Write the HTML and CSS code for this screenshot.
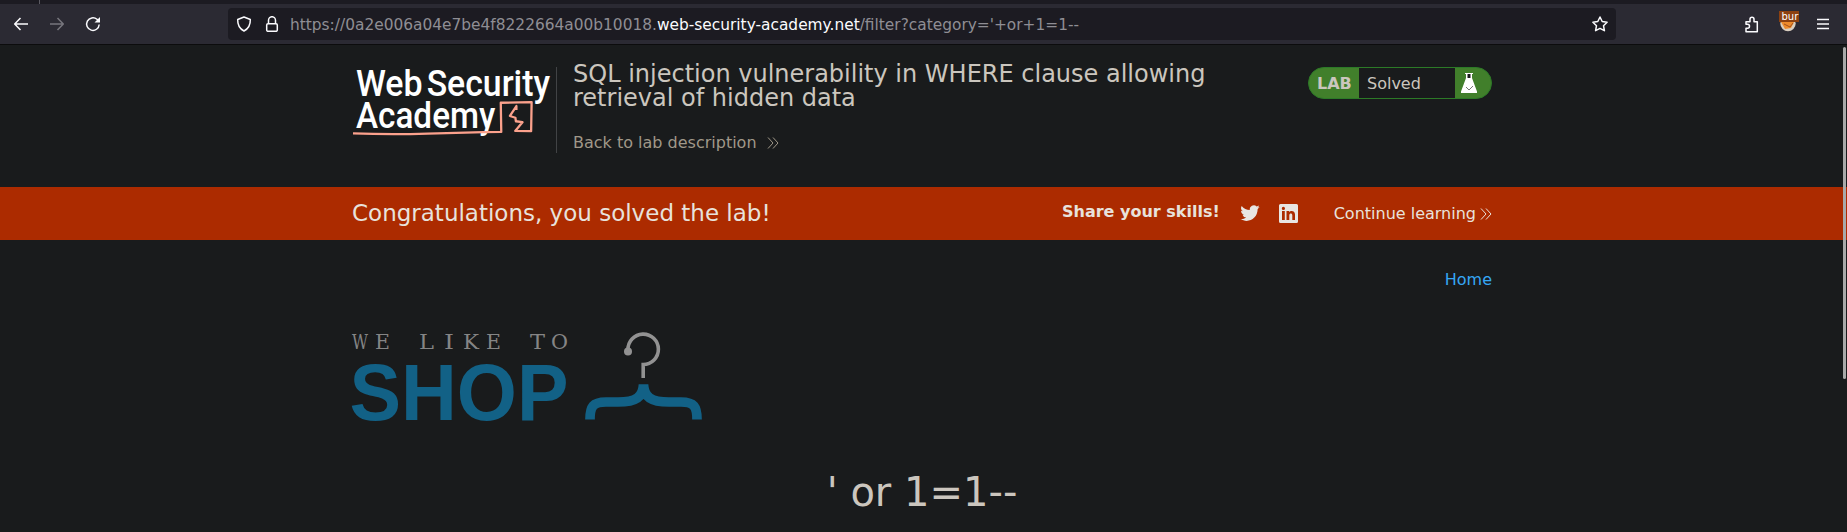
FILE: index.html
```html
<!DOCTYPE html>
<html lang="en">
<head>
<meta charset="utf-8">
<title>SQL injection vulnerability in WHERE clause allowing retrieval of hidden data</title>
<link rel="stylesheet" href="styles.css">
</head>
<body>
<div class="tabstrip"><span class="tab-divider"></span></div>
<nav class="toolbar">
  <svg class="nav-icon back" width="16" height="16" viewBox="0 0 16 16"><path d="M15 8H2M7.500 2L1.700 8l5.800 6"/></svg>
  <svg class="nav-icon forward" width="16" height="16" viewBox="0 0 16 16"><path d="M1 8h13M8.500 2l5.800 6-5.800 6"/></svg>
  <svg class="nav-icon reload" width="16" height="16" viewBox="0 0 16 16"><path d="M14.200 8.500A6.300 6.300 0 1 1 12 3.300l1 1"/><path class="solid" d="M15 1v5.500H9.500z"/></svg>
  <div class="urlbar">
    <svg class="nav-icon" width="16" height="16" viewBox="0 0 16 16"><path d="M8 1l6.300 2.500c.2 5-1.500 9-6.300 11.500C3.200 12.500 1.500 8.500 1.700 3.500z"/></svg>
    <svg class="nav-icon lock" width="14" height="16" viewBox="0 0 14 16"><path d="M3.500 7.500V4.200a3.500 3.500 0 0 1 7 0v3.300"/><rect x="1.700" y="7.700" width="10.600" height="7.600" rx="1.300"/></svg>
    <span class="url">https://0a2e006a04e7be4f8222664a00b10018.<b>web-security-academy.net</b>/filter?category='+or+1=1--</span>
    <svg class="nav-icon star" width="16" height="16" viewBox="0 0 16 16"><path d="M8 1l2.200 4.500 4.900.7-3.600 3.500.9 5L8 12.400l-4.400 2.300.9-5L.9 6.200l4.900-.7z"/></svg>
  </div>
  <svg class="nav-icon puzzle" width="16" height="17" viewBox="0 0 16 17"><path d="M2 5.700h4V3.200a2 2 0 0 1 4 0v2.500h3.300v10H2v-3.500h1.500a2 2 0 0 0 0-4H2z"/></svg>
  <svg class="profile" width="20" height="22" viewBox="0 0 20 22"><circle cx="9" cy="12.500" r="7.700" fill="#d9cfc0"/><path d="M2 11h13l-3 6-6 1z" fill="#ed8b2c"/><path d="M5 13l6 3 3-4" stroke="#a4501b" fill="none"/><path d="M0 0h20v11H0z" fill="#8c4111"/><text x="2.500" y="8.500">bur</text></svg>
  <svg class="nav-icon" width="12" height="12" viewBox="0 0 12 12"><path d="M0 1.500h12M0 6h12M0 10.500h12"/></svg>
</nav>
<header class="lab-header container">
  <svg class="academy-logo" width="205" height="86" viewBox="0 0 205 86">
    <text x="4" y="28.700" class="logo-word" textLength="67" lengthAdjust="spacingAndGlyphs">Web</text>
    <text x="75" y="28.700" class="logo-word" textLength="124" lengthAdjust="spacingAndGlyphs">Security</text>
    <text x="4" y="61.200" class="logo-word" textLength="140" lengthAdjust="spacingAndGlyphs">Academy</text>
    <path class="logo-line" d="M1 66.500q36 1.500 75 .3t74-1.800l-.5-29.300 31-.7-.5 29.300-16-.3 7.300-8.700-6.600-1-.5-3.500-5.500-1.800 6.500-10v4"/>
  </svg>
  <div class="title-block">
    <h2 class="title">SQL injection vulnerability in WHERE clause allowing<br>retrieval of hidden data</h2>
    <a class="back-link">Back to lab description
      <svg class="chevrons" width="12" height="12" viewBox="0 0 12 12"><path d="M1 .5L6 6l-5 5.500M6 .5L11 6l-5 5.500"/></svg></a>
  </div>
  <div class="lab-status">
    <span class="lab-label">LAB</span><span class="lab-state">Solved</span>
    <span class="lab-flask"><svg width="18" height="22" viewBox="0 0 18 22"><path d="M5 1h8v1h-1v4l5 13.500V21H1v-1.500L6 6V2H5z" fill="#fff"/><path d="M7.500 2h3v4h-3z" fill="#1a1c1d"/><path d="M6 15l3 3 4-4" fill="none" stroke="#777"/></svg></span>
  </div>
</header>
<section class="banner">
  <div class="container banner-row">
    <h4 class="congrats">Congratulations, you solved the lab!</h4>
    <strong class="share">Share your skills!</strong>
    <svg class="social twitter" width="20" height="20" viewBox="0 0 24 24"><path d="M23.600 4.900a9.500 9.500 0 0 1-2.700.7 4.700 4.700 0 0 0 2.100-2.600 9.600 9.600 0 0 1-3 1.200 4.800 4.800 0 0 0-8.200 4.300A13.500 13.500 0 0 1 2 3.600a4.800 4.800 0 0 0 1.500 6.300 4.700 4.700 0 0 1-2.200-.6 4.800 4.800 0 0 0 3.800 4.700 4.700 4.700 0 0 1-2.100.1 4.800 4.800 0 0 0 4.400 3.300A9.500 9.500 0 0 1 .4 19.300C10 25 21 19 21.200 7.300z"/></svg>
    <svg class="social linkedin" width="19" height="19" viewBox="0 0 19 19"><path fill-rule="evenodd" d="M1.500 0h16A1.500 1.500 0 0 1 19 1.500v16a1.500 1.500 0 0 1-1.500 1.500h-16A1.500 1.500 0 0 1 0 17.500v-16A1.500 1.500 0 0 1 1.500 0zM3 7v9h2.800V7zM4.400 2.800a1.600 1.600 0 1 0 0 3.200 1.600 1.600 0 0 0 0-3.200zM7.500 7v9h2.800v-4.700c0-2.500 3-2.500 3 0V16H16v-5.500c0-4-4.500-4.500-5.800-2.200V7z"/></svg>
    <a class="continue">Continue learning <svg class="chevrons" width="12" height="12" viewBox="0 0 12 12"><path d="M1 .5L6 6l-5 5.500M6 .5L11 6l-5 5.500"/></svg></a>
  </div>
</section>
<main class="container">
  <div class="top-links"><a class="home">Home</a></div>
  <svg class="shop-logo" width="352" height="92" viewBox="0 0 352 92">
    <text class="tagline" y="17" x="0" textLength="16" lengthAdjust="spacingAndGlyphs">W</text>
    <text class="tagline" y="17" x="23" textLength="15" lengthAdjust="spacingAndGlyphs">E</text>
    <text class="tagline" y="17" x="67" textLength="15" lengthAdjust="spacingAndGlyphs">L</text>
    <text class="tagline" y="17" x="92" textLength="10" lengthAdjust="spacingAndGlyphs">I</text>
    <text class="tagline" y="17" x="111" textLength="16" lengthAdjust="spacingAndGlyphs">K</text>
    <text class="tagline" y="17" x="134" textLength="15" lengthAdjust="spacingAndGlyphs">E</text>
    <text class="tagline" y="17" x="178" textLength="15" lengthAdjust="spacingAndGlyphs">T</text>
    <text class="tagline" y="17" x="199" textLength="17" lengthAdjust="spacingAndGlyphs">O</text>
    <text class="shop" x="-2.500" y="87.500" textLength="219" lengthAdjust="spacingAndGlyphs">SHOP</text>
    <circle cx="276" cy="19.500" r="4" fill="#929292"/>
    <path d="M276 18a15.200 15.200 0 1 1 15.200 14.500V46" fill="none" stroke="#929292" stroke-width="3.600"/>
    <path d="M238 87.500c0-13 3-17.500 16-17.500h12c18 0 25-5 25.500-17.500C292 65 299 70 317 70h12c13 0 16 4.500 16 17.500" fill="none" stroke="#126186" stroke-width="9.700"/>
  </svg>
  <h1 class="category">' or 1=1--</h1>
</main>
</body>
</html>
```
FILE: styles.css
```css
* { box-sizing: border-box; }
body { margin: 0; height: 532px; overflow: hidden; background: #191b1c; color: #cbc6be; font: 16px/20px "DejaVu Sans", sans-serif; position: relative; }
body::after { content: ""; position: absolute; right: 1px; top: 47px; width: 3px; height: 332px; border-radius: 2px; background: #a9a9a9; }
h1, h2, h4 { margin: 0; font-weight: 400; }
.container { width: 1140px; margin: 0 auto 0 352px; }
.tabstrip { height: 4px; background: #1c1b22; padding-left: 39px; }
.tab-divider { display: block; width: 1px; height: 4px; background: #5b5a62; }
.toolbar { height: 41px; background: #2b2a33; border-bottom: 1px solid #0c0c0d; display: flex; align-items: center; padding-left: 13px; }
.nav-icon { display: block; flex: none; fill: none; stroke: #fbfbfe; stroke-width: 1.5; stroke-linejoin: round; }
.nav-icon .solid { fill: #fbfbfe; stroke: none; }
.forward { margin-left: 20px; stroke: #77767d; }
.reload { margin-left: 20px; }
.urlbar { width: 1388px; height: 32px; margin-left: 127px; padding-left: 8px; display: flex; align-items: center; background: #1c1b22; border-radius: 4px; }
.lock { margin-left: 13px; }
.url { margin: 1px 0 0 11px; font-size: 15.4px; color: #8f8e94; white-space: nowrap; }
.url b { font-weight: 400; color: #fbfbfe; }
.star { margin: 0 8px 0 auto; }
.puzzle { margin-left: 128px; }
.profile { margin: -5px 18px 0 19px; }
.profile text { font: 10px "DejaVu Sans", sans-serif; fill: #fff; }
.lab-header { height: 142px; display: flex; padding-top: 17px; }
.academy-logo { margin-top: 5px; border-right: 1px solid #414345; flex: none; overflow: visible; }
.logo-word { font: 500 38px Roboto, sans-serif; fill: #fff; }
.logo-line { fill: none; stroke: #fba18c; stroke-width: 2.3; stroke-linejoin: round; }
.title-block { margin-left: 16px; width: 734px; }
.title { font-size: 24px; line-height: 24px; }
.back-link { display: flex; align-items: center; gap: 10px; margin-top: 23px; color: #a09889; }
.chevrons { fill: none; stroke: currentColor; stroke-width: 1; }
.lab-status { display: flex; width: 184px; height: 32px; margin: 5px 0 0 auto; border: 1px solid #2c7a27; border-radius: 16px; background: #417f2b; overflow: hidden; line-height: 32px; }
.lab-label { width: 50px; padding-left: 8px; font-weight: 700; }
.lab-state { width: 96px; padding-left: 8px; background: #191b1c; }
.lab-flask { padding: 4px 0 0 5px; line-height: 0; }
.banner { height: 53px; background: #ac2b00; color: #e8e2dc; }
.banner-row { display: flex; align-items: flex-start; }
.congrats { font-size: 23px; line-height: 28px; padding-top: 12px; width: 710px; white-space: nowrap; }
.share { padding-top: 15px; width: 178px; }
.social { fill: #e8e6e3; flex: none; }
.twitter { margin-top: 16px; }
.linkedin { margin: 17px 0 0 19px; }
.continue { display: flex; align-items: center; gap: 4px; margin: 17px 0 0 auto; white-space: nowrap; }
.top-links { padding-top: 30px; text-align: right; }
.home { color: #35a7f5; }
.shop-logo { display: block; margin-top: 42px; overflow: visible; }
.tagline { font: 21px "DejaVu Serif", serif; fill: #858585; }
.shop { font: 700 80px "Liberation Sans", sans-serif; fill: #126186; }
.category { text-align: center; font-size: 40px; line-height: 46px; margin-top: 45px; }
```
